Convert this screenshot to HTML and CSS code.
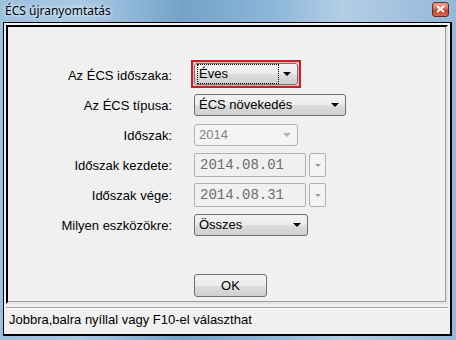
FILE: index.html
```html
<!DOCTYPE html>
<html lang="hu">
<head>
<meta charset="utf-8">
<title>ÉCS újranyomtatás</title>
<link rel="stylesheet" href="styles.css">
</head>
<body>
<div class="window">
  <div class="titlebar">
    <span class="title">ÉCS újranyomtatás</span>
    <span class="close"><svg width="9" height="8" viewBox="0 0 9 8"><path d="M1 1 L8 7 M8 1 L1 7" stroke="#fff" stroke-width="2"/></svg></span>
  </div>
  <div class="client">
    <div class="panel">
      <div class="form">
        <label class="lbl">Az ÉCS időszaka:</label>
        <div class="ctl"><div class="focusring"><div class="combo w104"><span class="val dotted">Éves</span><span class="arrow"></span></div></div></div>

        <label class="lbl">Az ÉCS típusa:</label>
        <div class="ctl"><div class="combo w153"><span class="val">ÉCS növekedés</span><span class="arrow"></span></div></div>

        <label class="lbl">Időszak:</label>
        <div class="ctl"><div class="combo w104 disabled"><span class="val">2014</span><span class="arrow"></span></div></div>

        <label class="lbl">Időszak kezdete:</label>
        <div class="ctl"><div class="datebox">2014.08.01</div><div class="dropbtn"><span class="arrow"></span></div></div>

        <label class="lbl">Időszak vége:</label>
        <div class="ctl"><div class="datebox">2014.08.31</div><div class="dropbtn"><span class="arrow"></span></div></div>

        <label class="lbl">Milyen eszközökre:</label>
        <div class="ctl"><div class="combo w114"><span class="val">Összes</span><span class="arrow"></span></div></div>
      </div>
      <div class="buttons"><button class="ok">OK</button></div>
    </div>
    <div class="status">Jobbra,balra nyíllal vagy F10-el választhat</div>
  </div>
</div>
</body>
</html>
```

FILE: styles.css
```css
html, body { margin: 0; padding: 0; }
body { width: 456px; height: 340px; overflow: hidden; font-family: "Liberation Sans", Arial, sans-serif; font-size: 13px; color: #000; }

.window {
  width: 456px; height: 340px; box-sizing: border-box;
  background: linear-gradient(90deg, #9cbfdd 0%, #a9c9e5 18%, #74a2c9 40%, #8db6d9 60%, #b3cee6 75%, #93b8d9 100%);
  display: flex; flex-direction: column;
  padding: 0 4px 4px 3px;
}
.titlebar {
  height: 22px; display: flex; align-items: center; justify-content: space-between;
  padding: 0 3px 0 2px;
}
.title {
  font-family: "Noto Sans", "Open Sans", sans-serif; font-size: 12px; color: #000;
  text-shadow: 0 0 6px #e8f2fb, 0 0 3px #e8f2fb;
  position: relative; top: -1px;
}
.close {
  width: 17px; height: 15px; box-sizing: border-box; margin-top: -4px;
  border: 1px solid #6e2a1c; border-radius: 3px;
  background: linear-gradient(#e8a493 0%, #d8735c 45%, #c2432a 55%, #d16a4d 100%);
  display: flex; align-items: center; justify-content: center;
}
.client {
  flex: 1; display: flex; flex-direction: column;
  border: 1px solid #000; border-width: 1px 2px 2px 1px;
  background: #f0f0f0; padding: 2px;
}
.panel {
  flex: 1; display: flex; flex-direction: column;
  border: 2px solid; border-color: #000 #e3e3e3 #e3e3e3 #000;
  box-shadow: inset -1px -1px 0 #a0a0a0;
}
.form {
  display: grid; grid-template-columns: 164px auto; grid-auto-rows: 30px;
  column-gap: 22px; align-items: center;
  margin-top: 33px;
}
.lbl { text-align: right; }
.ctl { display: flex; align-items: center; gap: 3px; }

.focusring { border: 2px solid #c8202a; padding: 1px; margin: -3px 0 0 -3px; box-shadow: 0 0 0 1px #f0b0b0 inset; }
.combo {
  height: 22px; box-sizing: border-box; display: flex; align-items: center; justify-content: space-between;
  border: 1px solid #707070; border-radius: 3px;
  background: linear-gradient(#f2f2f2 0%, #ebebeb 50%, #dddddd 51%, #cfcfcf 100%);
  padding: 0 6px 0 3px;
}
.w104 { width: 104px; }
.w153 { width: 152px; }
.w114 { width: 114px; }
.val { font-size: 13px; line-height: 16px; padding: 0 1px; }
.dotted { outline: 1px dotted #000; outline-offset: 0; width: 78px; line-height: 18px; }
.arrow { width: 0; height: 0; border-left: 4px solid transparent; border-right: 4px solid transparent; border-top: 4px solid #000; }
.combo.disabled { border-color: #adb2b5; background: #f4f4f4; color: #838383; }
.combo.disabled .arrow { border-top-color: #adb2b5; }

.datebox {
  width: 112px; height: 24px; box-sizing: border-box;
  border: 1px solid #adb2b5; border-radius: 2px; background: #f0f0f0;
  font-family: "Liberation Mono", "Courier New", monospace; font-size: 14px; color: #6d6d6d;
  display: flex; align-items: center; padding-left: 5px;
}
.dropbtn {
  width: 17px; height: 24px; box-sizing: border-box;
  border: 1px solid #adb2b5; border-radius: 2px; background: #f4f4f4;
  display: flex; align-items: center; justify-content: center;
}
.dropbtn .arrow { border-top-color: #9a9a9a; border-left-width: 3px; border-right-width: 3px; border-top-width: 3px; }

.buttons { margin-top: 34px; padding-left: 186px; }
.ok {
  width: 73px; height: 23px; font-family: "Liberation Sans", Arial, sans-serif; font-size: 13px;
  border: 1px solid #707070; border-radius: 3px;
  background: linear-gradient(#f2f2f2 0%, #ebebeb 50%, #dddddd 51%, #cfcfcf 100%);
  padding: 0; color: #000;
}
.status {
  height: 25px; box-sizing: border-box; border-top: 1px solid #a0a0a0; box-shadow: inset 0 1px 0 #fff;
  margin-top: 3px; padding: 4px 0 0 3px; font-size: 13px;
}
```
